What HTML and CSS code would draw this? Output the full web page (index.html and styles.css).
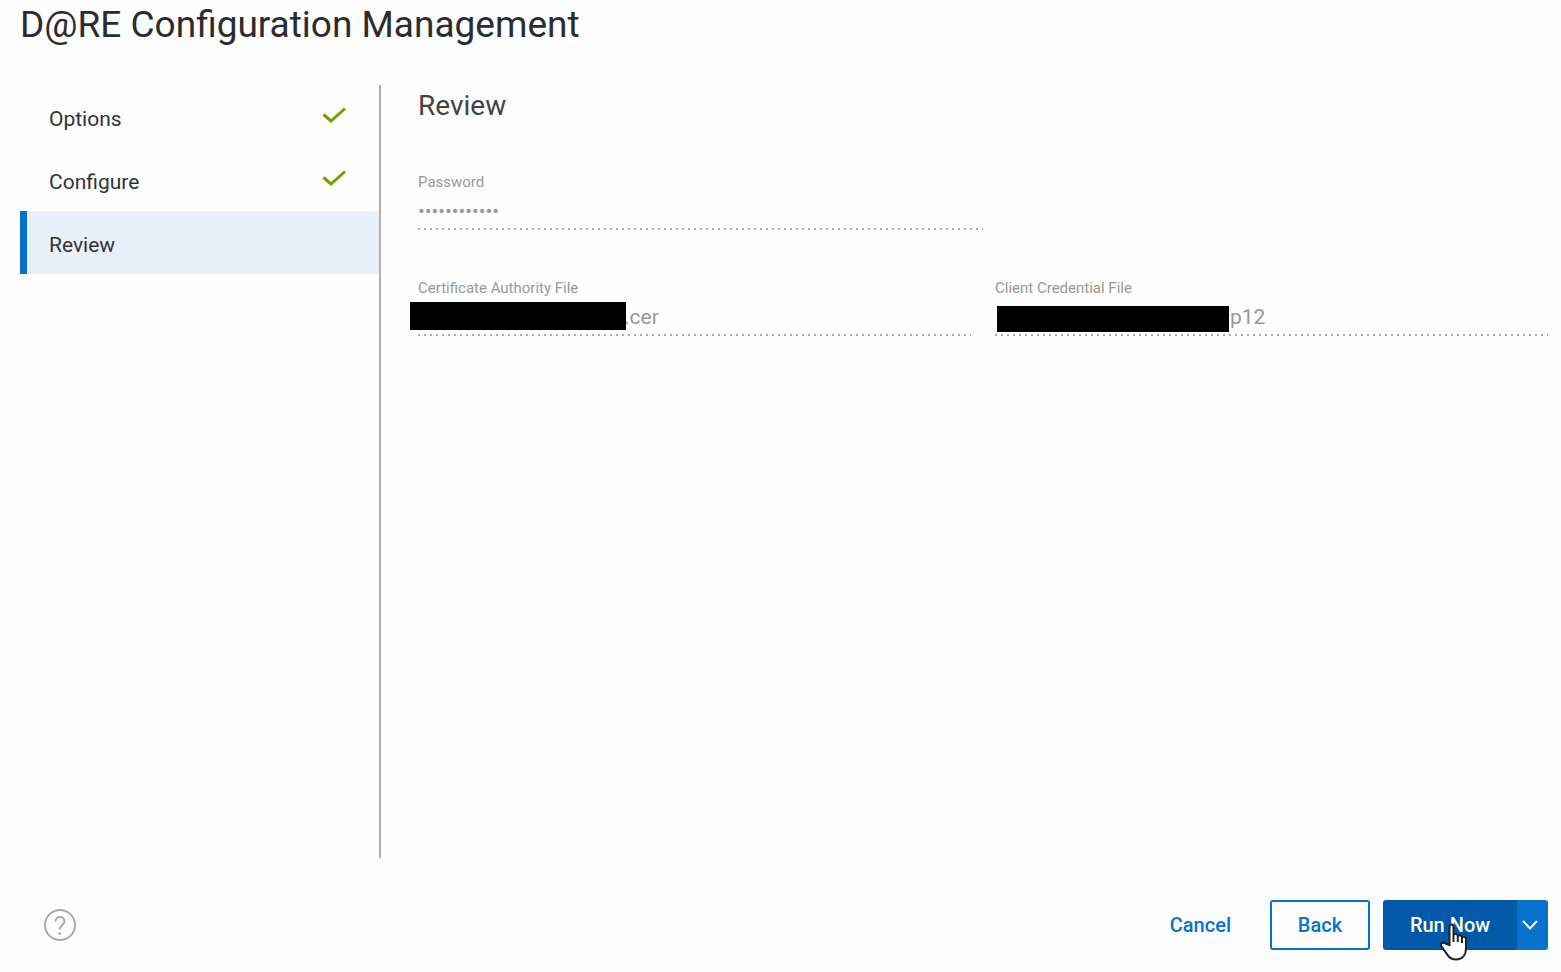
FILE: index.html
```
<!DOCTYPE html>
<html lang="en">
<head>
    <meta charset="UTF-8">
    <title>D@RE Configuration Management</title>
    <link rel="stylesheet" href="styles.css">
</head>

<body>
    <h1 class="title">D@RE Configuration Management</h1>

    <div class="wizard">
        <nav class="steps">
            <a class="step" href="#options">
                Options
                <svg class="check" width="24" height="16" viewBox="0 0 24 16"><path d="M1.5 7.5 L9 14 L23 1.5" /></svg>
            </a>
            <a class="step" href="#configure">
                Configure
                <svg class="check" width="24" height="16" viewBox="0 0 24 16"><path d="M1.5 7.5 L9 14 L23 1.5" /></svg>
            </a>
            <a class="step active" href="#review" aria-current="step">Review</a>
        </nav>

        <main class="content">
            <h2 class="heading">Review</h2>

            <div class="field password">
                <label for="password">Password</label>
                <input type="password" id="password" value="abcdefghijkl" readonly>
            </div>

            <div class="files">
                <div class="field ca">
                    <label for="ca_file">Certificate Authority File</label>
                    <input type="text" id="ca_file" value=".cer" readonly>
                    <span class="mask"></span>
                </div>
                <div class="field client">
                    <label for="client_file">Client Credential File</label>
                    <input type="text" id="client_file" value="p12" readonly>
                    <span class="mask"></span>
                </div>
            </div>
        </main>
    </div>

    <footer class="footer">
        <button class="help" type="button" aria-label="Help">
            <svg width="32" height="32" viewBox="0 0 32 32">
                <circle cx="16" cy="16" r="15" />
                <path d="M11.5 12.5 C11.5 6.5 20.5 6.5 20.5 12.3 C20.5 16 15.7 16 15.7 20.5" />
                <path d="M14.2 24.5 H17.2" />
            </svg>
        </button>

        <div class="buttons">
            <button class="btn cancel" type="button">Cancel</button>
            <button class="btn back" type="button">Back</button>
            <div class="split">
                <button class="btn run" type="button">Run Now</button>
                <button class="btn more" type="button" aria-label="More run options">
                    <svg width="16" height="10" viewBox="0 0 16 10"><path d="M1 1 L8 8.5 L15 1" /></svg>
                </button>
                <!-- hand pointer over the run button -->
                <svg class="pointer" width="30" height="40" viewBox="0 0 30 40">
                    <path d="M10.5 23 V5 C10.5 1.5 14.5 1.5 14.5 5 V13 C15 11.5 18.5 11.5 18.8 14 C19.5 12.8 22.5 13 23 15.3 C24 14.2 27 14.6 27 17.5 V26 C27 33 23.5 37.5 17 37.5 C11 37.5 9 34 6.5 30 L2.5 24.5 C0.5 21.5 4 19.5 6.5 21.5 Z" />
                    <path d="M14.5 13 V20 M18.8 14 V20 M23 15.5 V21" />
                </svg>
            </div>
        </div>
    </footer>
</body>
</html>
```
FILE: styles.css
```
* {
    box-sizing: border-box;
}

body {
    display: flex;
    flex-direction: column;
    min-height: 100vh;
    margin: 0;
    padding: 0 13px 22px 20px;
    background-color: #fdfdfd;
    color: #333;
    font-family: Roboto, "Liberation Sans", sans-serif;
}

button,
input {
    margin: 0;
    padding: 0;
    border: none;
    border-radius: 0;
    background: none;
    font-family: inherit;
}

.title {
    margin: 0;
    font-size: 37px;
    font-weight: 400;
    line-height: 50px;
    color: #2b2c30;
}

/* steps on the left, content on the right */
.wizard {
    display: flex;
    flex: 1;
    margin-top: 35px;
}

.steps {
    width: 361px;
    border-right: 2px solid #b0b0b4;
}

.step {
    display: flex;
    align-items: center;
    justify-content: space-between;
    height: 63px;
    padding: 4px 33px 0 29px;
    font-size: 21px;
    color: #333;
    text-decoration: none;
}

.step.active {
    border-left: 7px solid #0672cb;
    padding-left: 22px;
    background-color: #e8f0fa;
}

.check {
    margin-bottom: 8px;
    fill: none;
    stroke: #6ea204;
    stroke-width: 3;
}

.content {
    flex: 1;
    padding-left: 37px;
}

.heading {
    margin: 0;
    font-size: 28px;
    font-weight: 400;
    line-height: 42px;
    color: #444;
}

.field {
    position: relative;
    display: flex;
    flex-direction: column;
    /* dotted underline */
    background: repeating-linear-gradient(to right, #aaa 0 2px, transparent 2px 6px) left bottom / 100% 2px no-repeat;
}

.field label {
    font-size: 15px;
    line-height: 20px;
    color: #999;
}

.field input {
    width: 100%;
    height: 38px;
    font-size: 21px;
    color: #999;
    outline: none;
}

.field input[type="password"] {
    font-size: 20px;
}

.password {
    width: 50%;
    margin-top: 45px;
}

.files {
    display: grid;
    grid-template-columns: 1fr 1fr;
    gap: 24px;
    margin-top: 48px;
}

.ca input {
    padding-left: 206px;
}

.client input {
    padding-left: 235px;
}

/* hides the file name */
.mask {
    position: absolute;
    background-color: #000;
}

.ca .mask {
    top: 24px;
    left: -8px;
    width: 216px;
    height: 28px;
}

.client .mask {
    top: 28px;
    left: 2px;
    width: 232px;
    height: 26px;
}

.footer {
    display: flex;
    align-items: center;
    justify-content: space-between;
    margin-top: 42px;
    padding-left: 24px;
}

.help svg {
    display: block;
    fill: none;
    stroke: #aaa;
    stroke-width: 2;
}

.buttons {
    display: flex;
    align-items: center;
}

.btn {
    height: 50px;
    font-size: 20px;
    font-weight: 500;
    color: #0672cb;
    cursor: pointer;
}

.cancel {
    padding: 0 39px;
}

.back {
    width: 100px;
    border: 2px solid #0672cb;
    border-radius: 3px;
}

.split {
    position: relative;
    display: flex;
    margin-left: 13px;
}

.run {
    width: 134px;
    border-radius: 3px 0 0 3px;
    background-color: #0059a9;
    color: #fff;
}

.more {
    display: flex;
    align-items: center;
    justify-content: center;
    width: 31px;
    padding-right: 5px;
    border-radius: 0 3px 3px 0;
    background-color: #0672cb;
}

.more svg {
    fill: none;
    stroke: #fff;
    stroke-width: 2;
}

.pointer {
    position: absolute;
    top: 22px;
    left: 56px;
    fill: #fff;
    stroke: #222;
    stroke-width: 2;
    pointer-events: none;
}
```
